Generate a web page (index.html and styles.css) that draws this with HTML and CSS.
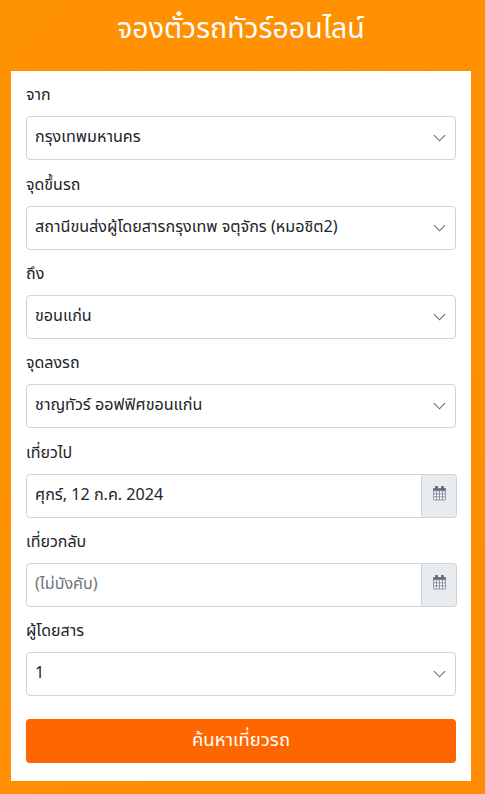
FILE: index.html
```html
<!DOCTYPE html>
<html lang="th">
<head>
<meta charset="utf-8">
<title>จองตั๋วรถทัวร์ออนไลน์</title>
<link rel="stylesheet" href="styles.css">
</head>
<body>
<h1 class="title">จองตั๋วรถทัวร์ออนไลน์</h1>
<form class="card">
  <div class="field">
    <label class="label">จาก</label>
    <div class="control"><span class="value">กรุงเทพมหานคร</span><svg class="chev" viewBox="0 0 14 8"><path d="M1 1l6 6 6-6"/></svg></div>
  </div>
  <div class="field">
    <label class="label">จุดขึ้นรถ</label>
    <div class="control"><span class="value">สถานีขนส่งผู้โดยสารกรุงเทพ จตุจักร (หมอชิต2)</span><svg class="chev" viewBox="0 0 14 8"><path d="M1 1l6 6 6-6"/></svg></div>
  </div>
  <div class="field">
    <label class="label">ถึง</label>
    <div class="control"><span class="value">ขอนแก่น</span><svg class="chev" viewBox="0 0 14 8"><path d="M1 1l6 6 6-6"/></svg></div>
  </div>
  <div class="field">
    <label class="label">จุดลงรถ</label>
    <div class="control"><span class="value">ชาญทัวร์ ออฟฟิศขอนแก่น</span><svg class="chev" viewBox="0 0 14 8"><path d="M1 1l6 6 6-6"/></svg></div>
  </div>
  <div class="field">
    <label class="label">เที่ยวไป</label>
    <div class="group">
      <div class="control date"><span class="value">ศุกร์, 12 ก.ค. 2024</span></div>
      <div class="addon"><svg class="cal" viewBox="0 0 14 15"><path class="cal-top" d="M1 3h2V1h2.500v2h3V1H11v2h2v3H1z"/><path class="cal-grid" d="M1.500 5.500h11v8.500h-11zM1.500 8.300h11M1.500 11.100h11M4.200 5.500V14M7 5.500V14M9.800 5.500V14"/></svg></div>
    </div>
  </div>
  <div class="field">
    <label class="label">เที่ยวกลับ</label>
    <div class="group">
      <div class="control date"><span class="value placeholder">(ไม่บังคับ)</span></div>
      <div class="addon"><svg class="cal" viewBox="0 0 14 15"><path class="cal-top" d="M1 3h2V1h2.500v2h3V1H11v2h2v3H1z"/><path class="cal-grid" d="M1.500 5.500h11v8.500h-11zM1.500 8.300h11M1.500 11.100h11M4.200 5.500V14M7 5.500V14M9.800 5.500V14"/></svg></div>
    </div>
  </div>
  <div class="field">
    <label class="label">ผู้โดยสาร</label>
    <div class="control"><span class="value">1</span><svg class="chev" viewBox="0 0 14 8"><path d="M1 1l6 6 6-6"/></svg></div>
  </div>
  <button class="submit" type="button">ค้นหาเที่ยวรถ</button>
</form>
</body>
</html>
```
FILE: styles.css
```css
* { box-sizing: border-box; }
html, body { height: 100%; }
body {
  margin: 0;
  padding: 0 14px 13px 11px;
  background: linear-gradient(135deg, #ff9200, #ff8c04);
  font-family: "Noto Sans Thai", "Noto Sans", "Liberation Sans", sans-serif;
  color: #212529;
  overflow: hidden;
}
.title {
  margin: 0;
  height: 71px;
  padding-top: 10px;
  text-align: center;
  color: #fff;
  font-size: 28.500px;
  line-height: 40px;
  font-weight: 400;
}
.card {
  background: #fff;
  height: 710px;
  padding: 11.450px 15px 0;
  display: flex;
  flex-direction: column;
}
.field { height: 89.330px; flex: none; }
.label { display: block; height: 34px; font-size: 16px; line-height: 27.500px; }
.control {
  height: 44px;
  display: flex;
  align-items: center;
  justify-content: space-between;
  padding: 0 8px;
  background: #fff;
  border: 1px solid #ced4da;
  border-radius: 4px;
  font-size: 16.150px;
}
.value { padding-bottom: 2px; }
.chev { width: 13px; height: 8px; margin-right: 1px; fill: none; stroke: #666; stroke-width: 1.100; }
.group { display: flex; width: 431px; }
.date { flex: 1; border-radius: 4px 0 0 4px; }
.addon {
  width: 35px;
  height: 44px;
  display: flex;
  align-items: center;
  justify-content: center;
  background: #e9ecef;
  border: 1px solid #ced4da;
  border-left: 0;
  border-radius: 0 4px 4px 0;
}
.cal { width: 15px; height: 16px; margin-bottom: 6px; }
.cal-top { fill: #666672; }
.cal-grid { fill: #fff; stroke: #7d8296; stroke-width: .8; }
.placeholder { color: #6c757d; }
.submit {
  height: 44px;
  margin-top: 11px;
  padding: 0 0 2px;
  flex: none;
  border: 0;
  border-radius: 4px;
  background: #ff6600;
  color: #fff;
  font-family: inherit;
  font-size: 18.500px;
}
```
